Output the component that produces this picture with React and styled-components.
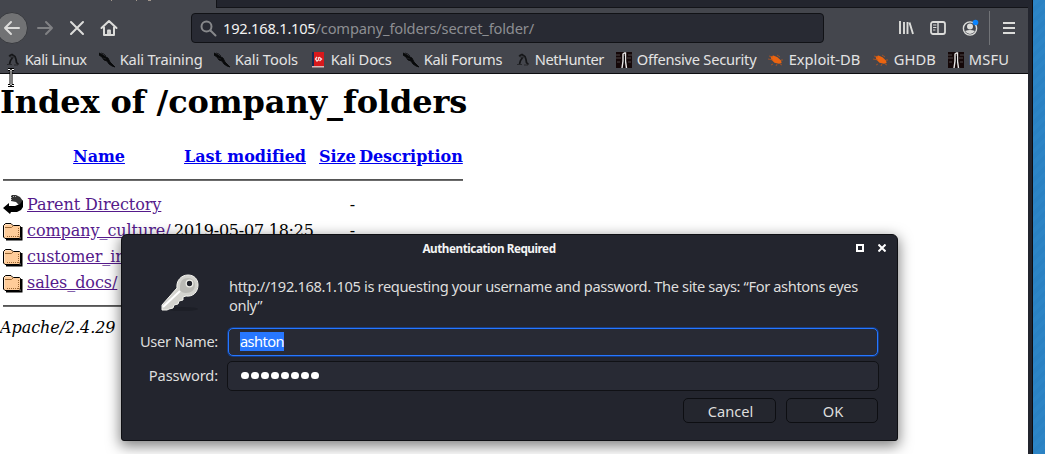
import React from "react";
import styled, { createGlobalStyle, css } from "styled-components";

const Global = createGlobalStyle`
  * { box-sizing: border-box; }
  html, body { margin: 0; padding: 0; overflow: hidden; }
  body { font-family: "Noto Sans", sans-serif; font-size: 14.67px; background: #fff; }
  svg { display: block; flex: none; }
`;

const Desktop = styled.div`
  position: relative;
  display: flex;
  width: 1045px;
  height: 454px;
  overflow: hidden;
  background: repeating-linear-gradient(135deg, #2b82c3 0 4px, #2d85c6 4px 8px);
`;
const Browser = styled.div`
  width: 1033px;
  height: 454px;
  display: flex;
  flex-direction: column;
  background: #23252e;
  border-right: 1px solid #0b0c10;
`;
const TabStrip = styled.div`
  height: 8px;
  display: flex;
  background: #23252e;
`;
const ActiveTab = styled.div`
  width: 217px;
  background: #44464d;
  border-right: 1px solid #121317;
`;
const EmptyTabs = styled.div`
  width: 811px;
  border-bottom: 1px solid #131419;
`;
const Toolbar = styled.div`
  width: 1028px;
  height: 39px;
  background: #44464d;
  display: flex;
  align-items: center;
  padding-top: 1px;
`;
const BackButton = styled.div`
  width: 32px;
  height: 32px;
  margin: 0 1px 0 -4px;
  border-radius: 50%;
  background: #717274;
  border: 1px solid #37393e;
  display: flex;
  align-items: center;
  justify-content: center;
`;
const NavIcon = styled.div`
  width: 32px;
  height: 32px;
  display: flex;
  align-items: center;
  justify-content: center;
`;
const UrlBar = styled.div`
  width: 633px;
  height: 30px;
  margin-left: 66px;
  border: 1px solid #111216;
  border-radius: 4px;
  background: #282a33;
  color: #8d8e92;
  display: flex;
  align-items: center;
  padding: 0 8px;
  gap: 6px;
`;
const Url = styled.span`
  white-space: nowrap;
  letter-spacing: -0.16px;
  b { font-weight: 400; color: #f2f2f2; letter-spacing: -0.24px; }
`;
const ToolIcons = styled.div`
  flex: 1;
  display: flex;
  align-items: center;
  padding-left: 66px;
`;
const ToolIcon = styled.div`
  width: 32px;
  height: 32px;
  display: flex;
  align-items: center;
  justify-content: center;
`;
const Divider = styled.div`
  width: 1px;
  height: 34px;
  margin: 0 3px;
  background: #717377;
`;
const Bookmarks = styled.div`
  width: 1028px;
  height: 27px;
  background: #44464d;
  border-bottom: 1px solid #0c0d10;
  display: flex;
  padding-left: 4px;
`;
const Bookmark = styled.div`
  width: ${(p) => p.$w}px;
  flex: none;
  display: flex;
  align-items: center;
  gap: 4.7px;
  color: #e3e3e3;
  white-space: nowrap;
  letter-spacing: ${(p) => p.$ls}px;
  span { margin-top: -2px; }
`;

const Page = styled.main`
  width: 1028px;
  flex: 1;
  background: #fff;
  color: #000;
  font: 16px "DejaVu Serif", serif;
  padding-top: 9px;
`;
const Heading = styled.h1`
  margin: 0 0 21px;
  height: 38px;
  font-size: 32px;
  line-height: 38px;
  white-space: nowrap;
  letter-spacing: -0.1px;
`;
const Listing = styled.table`
  width: 466px;
  table-layout: fixed;
  border-spacing: 2px;
  border-collapse: separate;
  line-height: 20px;
  letter-spacing: -0.06px;
  td, th { padding: 2px 1px 0; height: 24px; white-space: nowrap; vertical-align: middle; }
  td:first-child { padding: 1px; }
`;
const RuleCell = styled.td`
  && { height: 20px; }
`;
const Rule = styled.hr`
  margin: 8px 0;
  border: 0;
  height: 2px;
  background: #6b6b6b;
  border-top: 1px solid #555;
`;
const Link = styled.a`
  color: ${(p) => (p.$visited ? "#551a8b" : "#0000ee")};
  text-decoration: underline;
`;
const DateCell = styled.td`
  letter-spacing: -0.24px;
  text-indent: -1px;
`;
const Right = styled.td`
  text-align: right;
`;
const Footer = styled.address`
  line-height: 19px;
  letter-spacing: -0.07px;
`;

const Dialog = styled.section`
  position: absolute;
  left: 121px;
  top: 234px;
  width: 777px;
  height: 207px;
  background: #23252e;
  border: 1px solid #0e0f13;
  border-radius: 6px 6px 3px 3px;
  box-shadow: 0 4px 14px 1px rgba(0, 0, 0, 0.5);
  color: #dededd;
  display: flex;
  flex-direction: column;
`;
const TitleBar = styled.header`
  height: 26px;
  display: grid;
  grid-template-columns: 1fr 41px;
  align-items: center;
`;
const Title = styled.h2`
  margin: 0;
  font-size: 11.7px;
  font-weight: 700;
  color: #f4f4f4;
  text-align: center;
  letter-spacing: -0.45px;
`;
const WindowButtons = styled.div`
  display: flex;
  gap: 14px;
  align-items: center;
`;
const Message = styled.div`
  display: flex;
  height: 67px;
  padding: 12px 0 0 36px;
`;
const MessageText = styled.p`
  margin: 4px 0 0 27px;
  line-height: 19px;
  white-space: nowrap;
  letter-spacing: -0.375px;
`;
const Field = styled.label`
  display: grid;
  grid-template-columns: 96px 652px;
  column-gap: 9px;
  height: ${(p) => p.$h}px;
  align-items: center;
  text-align: right;
`;
const FieldName = styled.span`
  margin-top: -2px;
  letter-spacing: ${(p) => p.$ls}px;
`;
const Input = styled.div`
  height: ${(p) => (p.$focus ? 28 : 30)}px;
  margin: 0 ${(p) => (p.$focus ? 1 : 0)}px;
  border-radius: 5px;
  border: 1px solid #101115;
  background: #282a34;
  display: flex;
  align-items: center;
  padding: 0 0 1px ${(p) => (p.$focus ? 11 : 13)}px;
  ${(p) => p.$focus && css`
    border-color: #2777ff;
    box-shadow: 0 0 0 1px #143b83;
  `}
`;
const Selected = styled.span`
  background: #2777ff;
  color: #fff;
  height: 19px;
  line-height: 19px;
  letter-spacing: -0.6px;
`;
const Dots = styled.div`
  display: flex;
  gap: 2.5px;
`;
const Dot = styled.i`
  width: 7.5px;
  height: 7.5px;
  border-radius: 50%;
  background: #fff;
`;
const Actions = styled.footer`
  display: flex;
  justify-content: flex-end;
  gap: 10px;
  padding: 2px 19px 0 0;
`;
const Button = styled.button`
  width: ${(p) => p.$w}px;
  height: 25px;
  padding: 0 0 0 2px;
  border: 1px solid #0d0e12;
  border-radius: 5px;
  background: #24262e;
  color: #dededd;
  font: inherit;
  line-height: 22px;
`;
const Cursor = styled.svg`
  position: absolute;
  left: 7px;
  top: 68px;
`;

const Dragon = () => (
  <svg width="16" height="16" viewBox="0 0 16 16">
    <path d="M0 1l4 2 3 2 2 1 2 4 3 3 2 2-3-1-3-2-2-3-3-1-2-3-3-2z" fill="#08090a" stroke="#08090a" strokeWidth=".9" />
    <path d="M2 1l3 1 2 2M4 6l3 1" stroke="#1c1d20" fill="none" />
  </svg>
);
const Hunter = () => (
  <svg width="16" height="16" viewBox="0 0 16 16">
    <path d="M5 4l3-1.500 3 2 1 3 .5 3 2 2M9 5L6.500 8.500 5.500 12" fill="none" stroke="#151618" strokeWidth="1.700" />
    <path d="M3 12.500h5M10 13h4M5 4l4 2" stroke="#26272a" strokeWidth="1.200" fill="none" />
  </svg>
);
const Docs = () => (
  <svg width="16" height="16" viewBox="0 0 16 16">
    <path d="M2 0h2v15H2z" fill="#172a53" />
    <path d="M4 0h10v14H4z" fill="#d7191c" />
    <path d="M2 14h12v1.500H2z" fill="#d8b9ba" />
    <path d="M7 5L5.500 7l1.500 2 1.500-1V6l1-.5L11.500 7l-2 2" fill="none" stroke="#f6dada" strokeWidth="1.300" />
  </svg>
);
const OffSec = () => (
  <svg width="16" height="16" viewBox="0 0 16 16">
    <path d="M0 0h16v16H0z" fill="#140708" />
    <path d="M0 3h4M12 3h4M0 6h5M11 6h4M1 10h3M12 10h3" stroke="#4c4747" strokeWidth="1.200" />
    <path d="M6 16L7 9V2l1.500-1h1V9l1 7" fill="none" stroke="#e8e6e6" strokeWidth="1.400" />
    <path d="M8 4h1v8H8z" fill="#08080a" />
  </svg>
);
const Bug = () => (
  <svg width="16" height="16" viewBox="0 0 16 16">
    <path d="M2.500 4.500l3-1 4 1.800 3.500 3.200.6 2.500-2.600.8-4.500-1-3-3z" fill="#eb6410" />
    <path d="M1 4l4 1M0 7l5 1M9 3l3 2M13 8l2 0M5 12l-2 1M9 12l-1 2M12 12l2 1" stroke="#b4551f" strokeWidth=".8" fill="none" />
  </svg>
);
const Folder = () => (
  <svg width="20" height="22" viewBox="0 0 20 22">
    <path d="M3 20.500h15.500V8" stroke="#000" strokeWidth="2" fill="none" />
    <path d="M.5 18V6.500l2-2H8l2 2h6.500l1 1V18l-1 1.500H2z" fill="#ffcc99" stroke="#000" />
    <path d="M1.500 8.500h7l2-2" fill="none" stroke="#996633" />
    <path d="M4 17.500h12.500M15.500 9v9" stroke="#996633" strokeDasharray="1 1" />
    <path d="M1.500 17V7l1.500-1.500h4.500" stroke="#ffe2c4" fill="none" />
  </svg>
);
const BackArrow = () => (
  <svg width="20" height="22" viewBox="0 0 20 22">
    <path d="M8 2h5l4 2 3 4-1 3-3 1-3-3-5-1z" fill="#333" />
    <path d="M20 7v7l-2 3-4 2H8l-1 2-7-6 6-5v3h6l5-2z" fill="#000" />
    <path d="M8.500 2v6M10 3.500h3" stroke="#aaa" strokeDasharray="1 1" />
  </svg>
);
const Key = () => (
  <svg width="44" height="42" viewBox="0 0 44 42">
    <ellipse cx="24" cy="36" rx="16" ry="2" fill="#1d1f27" />
    <path d="M19 15C18 8 23 2 30 2c6 0 10 4 10 10 0 7-5 12-12 11l-3 1v3l-4 1-1 3-4 1-1 3-4 1-2 1H4v-5z" fill="#d3d3ce" stroke="#f5f5f0" />
    <path d="M22 14c0-6 3-9 8-9 4 0 7 3 7 7 0 5-4 8-9 8-3 0-5-1-6-3z" fill="#babab5" />
    <path d="M5 34l17-16" stroke="#fff" strokeWidth="2" />
    <circle cx="31.500" cy="10.500" r="3.300" fill="#20222a" stroke="#efefe9" strokeWidth="1.300" />
  </svg>
);
const glyph = { fill: "none", stroke: "#dcdcda", strokeWidth: 2, strokeLinecap: "round", strokeLinejoin: "round" };

const marks = [
  ["Kali Linux", 95, Hunter, -0.4], ["Kali Training", 115, Dragon, -0.15], ["Kali Tools", 96, Dragon, -0.1],
  ["Kali Docs", 93, Docs, -0.15], ["Kali Forums", 111, Dragon, -0.22], ["NetHunter", 102, Hunter, -0.45],
  ["Offensive Security", 152, OffSec, -0.25], ["Exploit-DB", 105, Bug, 0], ["GHDB", 75, Bug, 0.1], ["MSFU", 70, OffSec, 0.2],
];
const folders = [["company_culture/", "2019-05-07 18:25"], ["customer_info/", ""], ["sales_docs/", ""]];

export default function App() {
  return (
    <Desktop>
      <Global />
      <Browser>
        <TabStrip>
          <ActiveTab>
            <svg width="200" height="3"><path d="M111.500 0v1M136.500 0v1M148 .5h3" stroke="#c9b9a8" opacity=".7" /></svg>
          </ActiveTab>
          <EmptyTabs />
        </TabStrip>
        <Toolbar>
          <BackButton>
            <svg width="18" height="18" viewBox="0 0 18 18" {...glyph}><path d="M16 9H2M8 3L2 9l6 6" /></svg>
          </BackButton>
          <NavIcon>
            <svg width="18" height="18" viewBox="0 0 18 18" {...glyph} stroke="#808184"><path d="M2 9h14M10 3l6 6-6 6" /></svg>
          </NavIcon>
          <NavIcon>
            <svg width="16" height="16" viewBox="0 0 16 16" {...glyph}><path d="M2 2l12 12M14 2L2 14" /></svg>
          </NavIcon>
          <NavIcon>
            <svg width="18" height="18" viewBox="0 0 18 18" {...glyph}><path d="M1.500 9L9 2l7.500 7M4 8.500V16h10V8.500" /><path d="M8 16v-4.500h2V16" strokeWidth="1.800" /></svg>
          </NavIcon>
          <UrlBar>
            <svg width="17" height="17" viewBox="0 0 17 17" fill="none" stroke="#87888b" strokeWidth="2" strokeLinecap="round"><circle cx="6.500" cy="6.500" r="5" /><path d="M10.500 10.500l5 5" /></svg>
            <Url><b>192.168.1.105</b>/company_folders/secret_folder/</Url>
          </UrlBar>
          <ToolIcons>
            <ToolIcon>
              <svg width="16" height="16" viewBox="0 0 16 16" {...glyph}><path d="M2 1v13M6 2v12M9.500 2v12M11.500 2.500L15 14" strokeWidth="1.900" strokeLinecap="butt" /></svg>
            </ToolIcon>
            <ToolIcon>
              <svg width="16" height="16" viewBox="0 0 16 16" {...glyph} strokeWidth="1.800"><rect x="1" y="2" width="14" height="12" rx="2" /><path d="M8 2v12" strokeWidth="1.400" /><path d="M3.500 5H6M3.500 7.500H6M3.500 10H5" strokeWidth="1" /></svg>
            </ToolIcon>
            <ToolIcon>
              <svg width="18" height="18" viewBox="0 0 18 18"><circle cx="9" cy="9.500" r="6.600" fill="none" stroke="#dcdcda" strokeWidth="1.400" /><circle cx="9" cy="7.500" r="3" fill="#dcdcda" /><path d="M4 12q5-2 10 0-2 3-5 3t-5-3" fill="#dcdcda" /><circle cx="14.500" cy="3.500" r="2.800" fill="#0a84ff" /></svg>
            </ToolIcon>
            <Divider />
            <ToolIcon>
              <svg width="14" height="14" viewBox="0 0 14 14"><path d="M1 2h12M1 7h12M1 12h12" stroke="#dcdcda" strokeWidth="2" /></svg>
            </ToolIcon>
          </ToolIcons>
        </Toolbar>
        <Bookmarks>
          {marks.map(([name, w, Icon, ls]) => (
            <Bookmark key={name} $w={w} $ls={ls}><Icon /><span>{name}</span></Bookmark>
          ))}
        </Bookmarks>
        <Page>
          <Heading>Index of /company_folders</Heading>
          <Listing>
            <colgroup>
              <col style={{ width: 22 }} /><col style={{ width: 146 }} /><col style={{ width: 142 }} /><col style={{ width: 38 }} /><col style={{ width: 106 }} />
            </colgroup>
            <tbody>
              <tr><th /><th><Link>Name</Link></th><th><Link>Last modified</Link></th><th><Link>Size</Link></th><th><Link>Description</Link></th></tr>
              <tr><RuleCell colSpan={5}><Rule /></RuleCell></tr>
              <tr><td><BackArrow /></td><td><Link $visited>Parent Directory</Link></td><td /><Right>-</Right><td /></tr>
              {folders.map(([name, date]) => (
                <tr key={name}><td><Folder /></td><td><Link $visited>{name}</Link></td><DateCell>{date}</DateCell><Right>{date && "-"}</Right><td /></tr>
              ))}
              <tr><RuleCell colSpan={5}><Rule /></RuleCell></tr>
            </tbody>
          </Listing>
          <Footer>Apache/2.4.29 (</Footer>
        </Page>
      </Browser>
      <Dialog>
        <TitleBar>
          <Title>Authentication Required</Title>
          <WindowButtons>
            <svg width="8" height="8"><path d="M1 1h6v6H1z" fill="none" stroke="#fff" strokeWidth="2" /></svg>
            <svg width="8" height="8"><path d="M.5.5l7 7M7.500.5l-7 7" stroke="#fff" strokeWidth="2" /></svg>
          </WindowButtons>
        </TitleBar>
        <Message>
          <Key />
          <MessageText>
            http://192.168.1.105 is requesting your username and password. The site says: “For ashtons eyes<br />only”
          </MessageText>
        </Message>
        <Field $h={28}><FieldName $ls={-0.3}>User Name:</FieldName><Input $focus><Selected>ashton</Selected></Input></Field>
        <Field $h={40}><FieldName $ls={-0.12}>Password:</FieldName><Input><Dots>{Array.from({ length: 8 }, (_, i) => <Dot key={i} />)}</Dots></Input></Field>
        <Actions>
          <Button $w={93}>Cancel</Button>
          <Button $w={92}>OK</Button>
        </Actions>
      </Dialog>
      <Cursor width="8" height="19" viewBox="0 0 8 19">
        <path d="M1 1.500h2l1 1 1-1h2M4 2v15M1 17.500h2l1-1 1 1h2" fill="none" stroke="#000" strokeWidth="3" />
        <path d="M1 1.500h2l1 1 1-1h2M4 2v15M1 17.500h2l1-1 1 1h2" fill="none" stroke="#fff" strokeWidth="1" />
      </Cursor>
    </Desktop>
  );
}
